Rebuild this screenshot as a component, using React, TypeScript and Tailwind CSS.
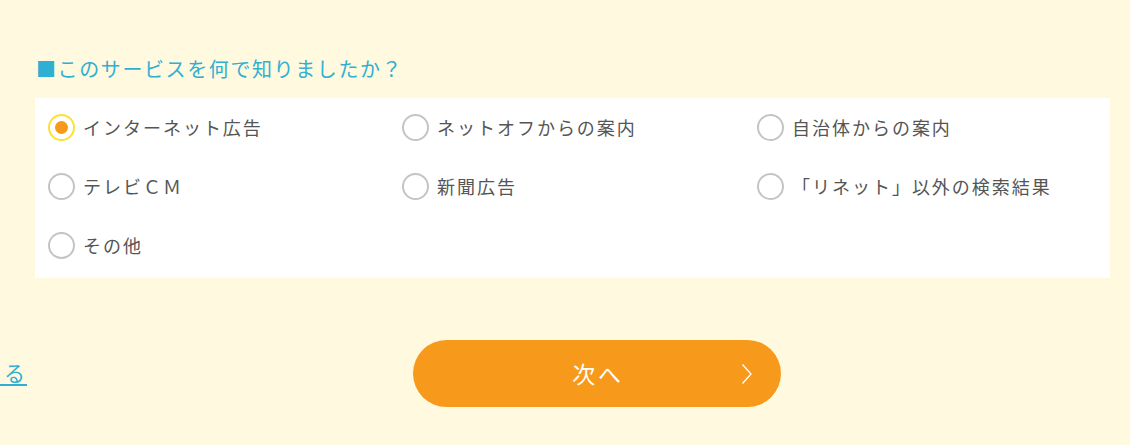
import React from "react";

const options = [
  "インターネット広告",
  "ネットオフからの案内",
  "自治体からの案内",
  "テレビＣＭ",
  "新聞広告",
  "「リネット」以外の検索結果",
  "その他",
];

export default function App() {
  return (
    <div
      className="w-[1130px] h-[445px] bg-[#fffadf] overflow-hidden relative"
      style={{ fontFamily: '"Noto Sans CJK JP", "Noto Sans", sans-serif' }}
    >
      <div className="pl-[35px] pr-[20px] pt-[54px]">
        <h2 className="text-[20px] leading-[30px] tracking-[0.08em] text-[#2fb0d3] pl-[1px]">
          ■このサービスを何で知りましたか？
        </h2>
        <div className="mt-[14px] bg-white pl-[13px] pt-[16px] pb-[19px] grid grid-cols-[354px_355px_1fr] gap-y-[32px]">
          {options.map((o, i) => (
            <label key={o} className="flex items-center h-[27px]">
              {i === 0 ? (
                <span className="w-[27px] h-[27px] rounded-full border-2 border-[#fde132] flex items-center justify-center">
                  <span className="w-[13px] h-[13px] rounded-full bg-[#f7991a]" />
                </span>
              ) : (
                <span className="w-[27px] h-[27px] rounded-full border-2 border-[#c4c4c4]" />
              )}
              <span className="ml-[8px] text-[18px] tracking-[0.11em] text-[#555555]">{o}</span>
            </label>
          ))}
        </div>
      </div>
      <div className="flex items-center mt-[62px]">
        <a className="w-[27px] pl-[4px] text-[21px] text-[#2fb0d3] leading-[24px] border-b-2 border-[#2fb0d3] -mt-[2px]">
          る
        </a>
        <button className="ml-[386px] w-[368px] h-[67px] rounded-full bg-[#f7991a] text-white relative flex items-center justify-center">
          <span className="text-[23px] tracking-[0.12em] pl-[2px]">次へ</span>
          <svg
            className="absolute right-[28px] top-1/2 -translate-y-1/2"
            width="12"
            height="22"
            viewBox="0 0 12 22"
            fill="none"
            stroke="white"
            strokeWidth="1.3"
          >
            <path d="M1.5 1.5 L10 11 L1.5 20.5" />
          </svg>
        </button>
      </div>
    </div>
  );
}
